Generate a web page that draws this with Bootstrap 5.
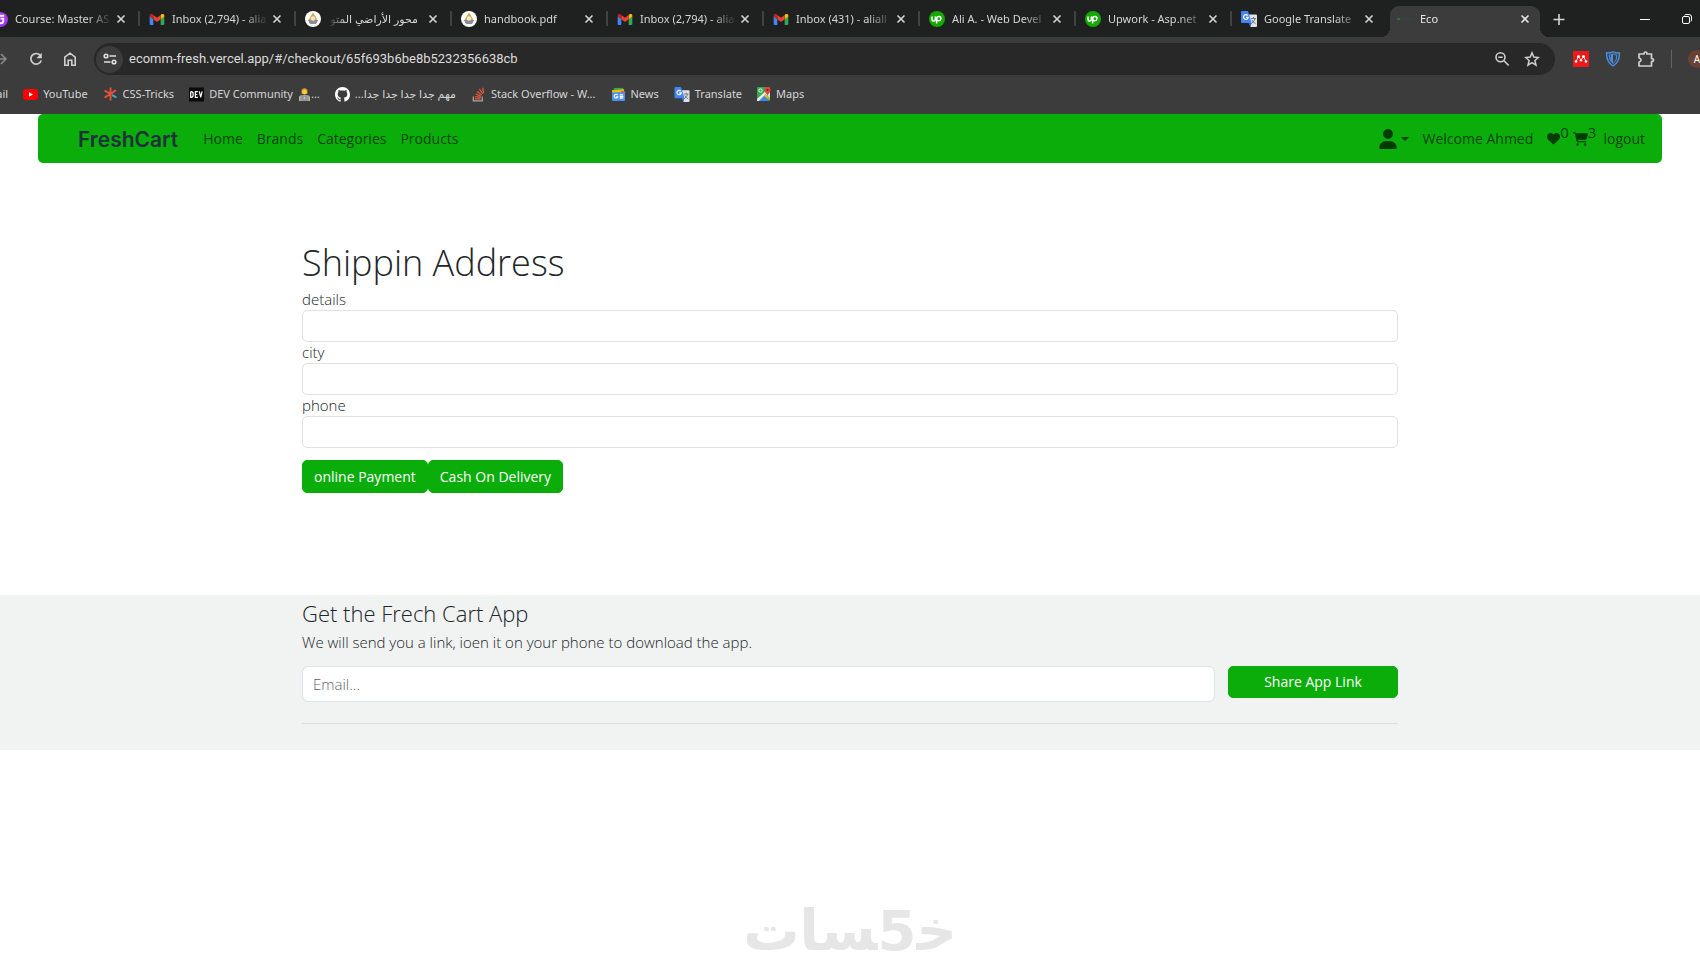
<!DOCTYPE html>
<html lang="en">
<head>
<meta charset="utf-8">
<meta name="viewport" content="width=device-width, initial-scale=1">
<title>Eco</title>
<link href="https://cdn.jsdelivr.net/npm/bootstrap@5.3.0/dist/css/bootstrap.min.css" rel="stylesheet">
<style>
  :root { --fresh: #0aad0a; --chrome: #3c3c3c; }
  body { font-family: "Open Sans", "Noto Sans", sans-serif; font-size: 15px; font-weight: 300; line-height: 21px; min-height: 100vh; overflow-x: hidden; }

  /* browser frame */
  .browser { background: var(--chrome); color: #d6d6d6; font-family: "Noto Sans", "DejaVu Sans", sans-serif; font-size: 11px; font-weight: 400; line-height: 16px; }
  .browser a { color: inherit; text-decoration: none; white-space: nowrap; }
  .browser button { background: none; border: 0; padding: 0; color: inherit; display: flex; }
  .tabstrip { background: #1f2120; height: 37px; padding-top: 6px; overflow: hidden; margin: 0; }
  .tabs-left { margin-left: -17px; }
  .tab { width: 156px; height: 31px; padding: 0 12px 5px 10px; position: relative; flex: none; }
  .tab + .tab:not(.current)::before { content: ""; position: absolute; left: -1px; top: 5px; width: 2px; height: 15px; background: #414342; }
  .tab a { gap: 7px; min-width: 0; flex: 1; }
  .tab-title { flex: 1; min-width: 0; overflow: hidden; -webkit-mask-image: linear-gradient(90deg, #000 72%, transparent 98%); mask-image: linear-gradient(90deg, #000 72%, transparent 98%); }
  .tab-title.rtl { direction: rtl; padding-right: 9px; -webkit-mask-image: linear-gradient(270deg, #000 82%, transparent); mask-image: linear-gradient(270deg, #000 82%, transparent); }
  .tab.current { color: #e6e6e6; z-index: 1; }
  .tab.current .tab-shape { position: absolute; inset: 0 3px 0 3px; background: var(--chrome); border-radius: 9px 9px 0 0; z-index: -1; }
  .tab-shape::before, .tab-shape::after { content: ""; position: absolute; bottom: 0; width: 9px; height: 9px; }
  .tab-shape::before { left: -9px; background: radial-gradient(circle at 0 0, transparent 9px, var(--chrome) 9px); }
  .tab-shape::after { right: -9px; background: radial-gradient(circle at 100% 0, transparent 9px, var(--chrome) 9px); }
  .window-controls { gap: 32px; margin-right: 8px; padding-bottom: 6px; }
  .toolbar { padding: 6px 0 7px; gap: 18px; height: 45px; overflow: hidden; }
  .toolbar-nav { gap: 18px; margin-left: -8px; }
  .omnibox { background: #282828; border-radius: 16px; height: 32px; padding: 0 15px 0 2px; gap: 6px; margin-left: -2px; }
  .browser .site-info { width: 27px; height: 27px; border-radius: 50%; background: #3c3c3c; }
  .omnibox input { flex: 1; min-width: 0; background: transparent; border: 0; color: #dcdcdc; font-family: Roboto, sans-serif; font-size: 13px; outline: 0; padding: 0; }
  .extensions { gap: 16px; margin-right: -6px; }
  .browser .avatar { width: 18px; height: 18px; border-radius: 50%; background: #6b4035; color: #fff; font-size: 10px; flex: none; }
  .bookmarks { height: 32px; gap: 15px; padding-bottom: 8px; margin-left: -22px; }
  .bookmarks a { gap: 5px; }

  /* shop page */
  .shop-nav { --bs-navbar-nav-link-padding-x: 7px; background: var(--fresh); margin: 0 38px; height: 49px; border-radius: 5px; padding: 0 17px 0 40px; }
  .shop-nav .navbar-brand { font-family: Inter, sans-serif; font-weight: 600; font-size: 21px; color: #21313c; margin-right: 18px; padding: 2px 0 0; }
  .shop-nav .nav-link { padding-top: 0; padding-bottom: 0; color: rgba(0,0,0,.65); font-size: 14px; font-weight: 400; }
  .counter { font-size: 15px; line-height: 14px; margin-bottom: 13px; }
  .shop-container { max-width: 1120px; }
  .checkout { padding-top: 79px; padding-bottom: 102px; }
  .checkout h1 { font-size: 36px; line-height: 41px; font-weight: 300; margin-bottom: 6px; }
  .checkout label { display: block; line-height: 21px; }
  .checkout .form-control { height: 32px; border-radius: 5px; }
  .form-control { border-color: #dee2e6; font-size: 15px; font-weight: 300; padding: 0 10px; }
  .btn-fresh { --bs-btn-color: #fff; --bs-btn-bg: var(--fresh); --bs-btn-border-color: var(--fresh); --bs-btn-hover-bg: #099309; --bs-btn-hover-color: #fff; --bs-btn-border-radius: 5px; --bs-btn-padding-y: 5px; --bs-btn-padding-x: 11px; --bs-btn-font-size: 14px; --bs-btn-line-height: 21px; --bs-btn-font-weight: 400; }
  .app-footer { background: #f0f3f2; padding: 6px 0 26px; }
  .app-footer h2 { font-size: 22px; line-height: 25px; font-weight: 300; margin-bottom: 6px; }
  .app-footer p { margin-bottom: 13px; }
  .app-footer .form-control { height: 36px; }
  .app-footer .btn-fresh { width: 170px; flex: none; padding-top: 4px; padding-bottom: 5px; }
  .app-footer form { gap: 13px; }
  .app-footer hr { margin: 21px 0 0; color: #c8cccb; opacity: .5; }
  .watermark { font-family: "DejaVu Sans", sans-serif; font-weight: 700; font-size: 56px; line-height: 60px; color: #e6e6e6; padding-bottom: 9px; }
</style>
</head>
<body class="d-flex flex-column bg-white">

<svg width="0" height="0" class="position-absolute" aria-hidden="true">
  <symbol id="i-gmail" viewBox="0 0 16 12"><path fill="#4285f4" d="M1 12h3V5.500L0 2.500V11a1 1 0 0 0 1 1z"/><path fill="#34a853" d="M12 12h3a1 1 0 0 0 1-1V2.500l-4 3z"/><path fill="#fbbc04" d="M12 1v4.600l4-3V1.800C16 .2 14.200-.6 13 .3z"/><path fill="#ea4335" d="M4 5.600V1l4 3 4-3v4.600l-4 3z"/><path fill="#c5221f" d="M0 1.800v.8l4 3V1L3 .3C1.800-.6 0 .2 0 1.800z"/></symbol>
  <symbol id="i-close" viewBox="0 0 12 12"><path stroke="currentColor" stroke-width="1.600" d="M2.500 2.500l7 7m0-7l-7 7"/></symbol>
  <symbol id="i-crest" viewBox="0 0 16 16"><circle cx="8" cy="8" r="8" fill="#fff"/><path fill="#d8a64a" d="M8 1.500l2.500 4 2.500 4.500H3l2.500-4.500z"/><path fill="#8a8d96" d="M3 9h10l-2 4H5z"/><circle cx="8" cy="7.500" r="2.200" fill="#f6e9c5"/><path stroke="#8b93a6" fill="none" d="M4 11q4 3 8 0"/></symbol>
  <symbol id="i-upwork" viewBox="0 0 16 16"><circle cx="8" cy="8" r="8" fill="#14a800"/><path fill="none" stroke="#fff" stroke-width="1.500" d="M3 5.500v2.700c0 2.400 3.300 2.400 3.300 0V5.500c.7 2.500 1.900 4.200 3.500 4.200a2.100 2.100 0 1 0-2-2.600L7.600 12.500"/></symbol>
  <symbol id="i-translate" viewBox="0 0 16 16"><path fill="#dfe2e6" d="M7 3.500h8a1 1 0 0 1 1 1V15a1 1 0 0 1-1 1H9.500z"/><path fill="none" stroke="#717780" d="M10 7.500h5M12.500 6v1.500M14 7.500q-.5 3-3.500 5M11 9q1 2.500 3.500 3.500"/><path fill="#4285f4" d="M1 0h6l3.700 12H1a1 1 0 0 1-1-1V1a1 1 0 0 1 1-1z"/><path fill="#3367d6" d="M7.500 12h3.200L9.300 16z"/><path fill="none" stroke="#fff" stroke-width="1.200" d="M6.700 4.500A2.300 2.300 0 1 0 7.200 6.300H5"/></symbol>
</svg>

<header class="browser">
  <div class="tabstrip d-flex justify-content-between align-items-start">
    <div class="tabs-left d-flex">
      <div class="tab d-flex align-items-center"><a href="#" class="d-flex align-items-center"><svg width="15" height="15" viewBox="0 0 16 16"><circle cx="8" cy="8" r="8" fill="#a435f0"/><path fill="none" stroke="#fff" stroke-width="2" d="M12 4H6v5c0 4 5 4 5 0V7H8"/></svg><span class="tab-title">Course: Master AS</span></a><button aria-label="Close tab"><svg width="12" height="12"><use href="#i-close"/></svg></button></div>
      <div class="tab d-flex align-items-center"><a href="#" class="d-flex align-items-center"><svg width="16" height="11"><use href="#i-gmail"/></svg><span class="tab-title">Inbox (2,794) - alia</span></a><button aria-label="Close tab"><svg width="12" height="12"><use href="#i-close"/></svg></button></div>
      <div class="tab d-flex align-items-center"><a href="#" class="d-flex align-items-center"><svg width="16" height="16"><use href="#i-crest"/></svg><span class="tab-title rtl">محور الأراضي المتو</span></a><button aria-label="Close tab"><svg width="12" height="12"><use href="#i-close"/></svg></button></div>
      <div class="tab d-flex align-items-center"><a href="#" class="d-flex align-items-center"><svg width="16" height="16"><use href="#i-crest"/></svg><span class="tab-title">handbook.pdf</span></a><button aria-label="Close tab"><svg width="12" height="12"><use href="#i-close"/></svg></button></div>
      <div class="tab d-flex align-items-center"><a href="#" class="d-flex align-items-center"><svg width="16" height="11"><use href="#i-gmail"/></svg><span class="tab-title">Inbox (2,794) - alia</span></a><button aria-label="Close tab"><svg width="12" height="12"><use href="#i-close"/></svg></button></div>
      <div class="tab d-flex align-items-center"><a href="#" class="d-flex align-items-center"><svg width="16" height="11"><use href="#i-gmail"/></svg><span class="tab-title">Inbox (431) - aliall</span></a><button aria-label="Close tab"><svg width="12" height="12"><use href="#i-close"/></svg></button></div>
      <div class="tab d-flex align-items-center"><a href="#" class="d-flex align-items-center"><svg width="16" height="16"><use href="#i-upwork"/></svg><span class="tab-title">Ali A. - Web Devel</span></a><button aria-label="Close tab"><svg width="12" height="12"><use href="#i-close"/></svg></button></div>
      <div class="tab d-flex align-items-center"><a href="#" class="d-flex align-items-center"><svg width="16" height="16"><use href="#i-upwork"/></svg><span class="tab-title">Upwork - Asp.net</span></a><button aria-label="Close tab"><svg width="12" height="12"><use href="#i-close"/></svg></button></div>
      <div class="tab d-flex align-items-center"><a href="#" class="d-flex align-items-center"><svg width="16" height="16"><use href="#i-translate"/></svg><span class="tab-title">Google Translate</span></a><button aria-label="Close tab"><svg width="12" height="12"><use href="#i-close"/></svg></button></div>
      <div class="tab current d-flex align-items-center"><span class="tab-shape"></span><a href="#" class="d-flex align-items-center"><svg width="16" height="4" viewBox="0 0 16 4"><path stroke="#1f7a35" stroke-width="2" d="M0 2h3"/><path stroke="#2b4a50" stroke-width="1.500" stroke-dasharray="1.500 .6" d="M4 2h12"/></svg><span class="tab-title">Eco</span></a><button aria-label="Close tab"><svg width="12" height="12"><use href="#i-close"/></svg></button></div>
      <button class="align-self-start pt-2" aria-label="New tab"><svg width="24" height="11" viewBox="0 0 24 11"><path stroke="currentColor" stroke-width="1.600" d="M16 0v11M10.500 5.500h11"/></svg></button>
    </div>
    <div class="window-controls d-flex align-items-center align-self-stretch">
      <button aria-label="Minimize"><svg width="10" height="10" viewBox="0 0 10 10"><path stroke="#fff" d="M0 5.500h10"/></svg></button>
      <button aria-label="Restore"><svg width="10" height="10" viewBox="0 0 10 10"><g fill="none" stroke="#fff"><rect x=".5" y="2.500" width="7" height="7" rx="1.500"/><path d="M2.500 1.200Q3 .5 4 .5h3q2.500 0 2.500 2.500v3q0 1-.7 1.500"/></g></svg></button>
    </div>
  </div>

  <div class="toolbar d-flex align-items-center">
    <div class="toolbar-nav d-flex align-items-center">
      <button aria-label="Forward"><svg width="18" height="16" viewBox="0 0 18 16"><path fill="none" stroke="#8a8a8a" stroke-width="1.600" d="M0 8h14M9 3l5 5-5 5"/></svg></button>
      <button aria-label="Reload"><svg width="16" height="16" viewBox="0 0 16 16"><path fill="none" stroke="#d0d0d0" stroke-width="1.700" d="M12.300 4.500A5.300 5.300 0 1 0 13.200 9.500"/><path fill="#d0d0d0" d="M13.800 1.800v5.400H8.400z"/></svg></button>
      <button aria-label="Home"><svg width="16" height="16" viewBox="0 0 16 16"><path fill="none" stroke="#d0d0d0" stroke-width="1.600" d="M2.800 6.200L8 2.200l5.200 4v8H9.800V9.300H6.200v4.900H2.800z"/></svg></button>
    </div>
    <div class="omnibox d-flex align-items-center flex-grow-1">
      <button class="site-info align-items-center justify-content-center flex-shrink-0" aria-label="Site information"><svg width="14" height="12" viewBox="0 0 14 12"><g fill="none" stroke="#e0e0e0" stroke-width="1.600"><circle cx="3" cy="3" r="1.800"/><path d="M6.500 3H13M1 9h6.500"/><circle cx="11" cy="9" r="1.800"/></g></svg></button>
      <input type="text" aria-label="Address" value="ecomm-fresh.vercel.app/#/checkout/65f693b6be8b5232356638cb">
      <button class="me-2" aria-label="Zoom"><svg width="16" height="16" viewBox="0 0 16 16"><g fill="none" stroke="#d0d0d0" stroke-width="1.600"><circle cx="6.500" cy="6.300" r="4.500"/><path d="M10 9.800l4.700 4.700M4.300 6.300h4.400"/></g></svg></button>
      <button aria-label="Bookmark this tab"><svg width="16" height="16" viewBox="0 0 16 16"><path fill="none" stroke="#d0d0d0" stroke-width="1.500" d="M8 1.800l1.800 4.300 4.600.4-3.500 3 1.100 4.600-4-2.500-4 2.500 1.100-4.600-3.500-3 4.600-.4z"/></svg></button>
    </div>
    <div class="extensions d-flex align-items-center">
      <button aria-label="Mendeley"><svg width="16" height="16" viewBox="0 0 16 16"><path fill="#f01818" d="M0 0h16v16H0z"/><g fill="#fff"><circle cx="5.500" cy="5.600" r="1.500"/><circle cx="10.500" cy="5.600" r="1.500"/><circle cx="3" cy="10.500" r="1.300"/><circle cx="8" cy="9.300" r="1.200"/><circle cx="13" cy="10.500" r="1.300"/></g><path fill="none" stroke="#fff" stroke-width=".8" d="M3 10.500L5.500 5.500 8 9l2.500-3.500 2.500 5"/></svg></button>
      <button aria-label="Shield"><svg width="16" height="16" viewBox="0 0 16 16"><g fill="none" stroke="#4a90e2"><path stroke-width="1.400" d="M1.500 2Q5 2.300 8 .9q3 1.400 6.500 1.100 0 9.500-6.500 13Q1.500 11.500 1.500 2z"/><path d="M4 4q2 0 4-1 2 1 4 1 0 6-4 8.500Q4 10 4 4z"/></g><path fill="#4a90e2" d="M8 3v9.500Q4 10 6 4z"/></svg></button>
      <button aria-label="Extensions"><svg width="18" height="18" viewBox="0 0 18 18"><path fill="none" stroke="#d0d0d0" stroke-width="1.700" stroke-linejoin="round" d="M2 4h5q0-2 1.500-2T10 4h4.500v4.500q2 0 2 1.500t-2 1.500V16H2v-4q2-.5 2-2T2 8z"/></svg></button>
      <span class="vr"></span>
      <button class="avatar align-items-center justify-content-center" aria-label="Profile">A</button>
    </div>
  </div>

  <nav class="bookmarks d-flex align-items-center" aria-label="Bookmarks">
    <a href="#">Gmail</a>
    <a href="#" class="d-flex align-items-center"><svg width="15" height="11" viewBox="0 0 15 11"><rect width="15" height="11" rx="3" fill="#f00"/><path fill="#fff" d="M6 3.300v4.400l4-2.200z"/></svg>YouTube</a>
    <a href="#" class="d-flex align-items-center"><svg width="15" height="14" viewBox="0 0 16 16"><g stroke-width="2.200" stroke-linecap="round"><path stroke="#e8503a" d="M8 8V1.500M8 8L2 4.500M8 8l-6 3.500M8 8v6.500M8 8l5.500-4"/><path stroke="#3fa9c9" d="M10.500 9.500l3.500 2"/></g></svg>CSS-Tricks</a>
    <a href="#" class="d-flex align-items-center"><svg width="15" height="15" viewBox="0 0 16 15"><path fill="#0a0a0a" d="M0 0h16v15H0z"/><g fill="none" stroke="#fff" stroke-width="1.300"><path d="M1.800 4.500v6q2.700.3 2.700-3t-2.700-3M9.500 4.500H6.800v6h2.700M6.800 7.500h2.200M11 4.200l1.500 6.300L14 4.200"/></g></svg>DEV Community <span class="d-flex align-items-center"><svg width="13" height="13" viewBox="0 0 13 13"><path fill="#b98a2e" d="M3.500 1.500Q6.500-1.500 9.500 1.500V6h-6z"/><circle cx="6.500" cy="4" r="2.400" fill="#ffcf3f"/><path fill="#c8b089" d="M1 13V9q0-2 5.500-2T12 9v4z"/><path fill="#8f969c" d="M2.500 7.500h8V13h-8z"/><circle cx="6.500" cy="10" r=".8" fill="#ddd"/></svg>...</span></a>
    <a href="#" class="d-flex align-items-center"><svg width="15" height="15" viewBox="0 0 16 16"><path fill="#fff" d="M8 0C3.580 0 0 3.580 0 8c0 3.540 2.290 6.530 5.470 7.590.4.070.55-.17.55-.38 0-.19-.01-.82-.01-1.490-2.010.37-2.530-.49-2.690-.94-.09-.23-.48-.94-.82-1.130-.28-.15-.68-.52-.01-.53.63-.01 1.080.58 1.230.82.72 1.210 1.870.87 2.330.66.070-.52.28-.87.51-1.070-1.780-.2-3.640-.89-3.640-3.950 0-.87.31-1.590.82-2.150-.08-.2-.36-1.020.08-2.120 0 0 .67-.21 2.200.82.64-.18 1.320-.27 2-.27s1.360.09 2 .27c1.530-1.040 2.200-.82 2.200-.82.44 1.100.16 1.920.08 2.120.51.56.82 1.270.82 2.150 0 3.070-1.870 3.750-3.650 3.950.29.25.54.73.54 1.480 0 1.070-.01 1.930-.01 2.200 0 .21.15.46.55.38A8.010 8.010 0 0 0 16 8c0-4.420-3.580-8-8-8z"/></svg><span dir="rtl">مهم جدا جدا جدا جدا...</span></a>
    <a href="#" class="d-flex align-items-center"><svg width="15" height="15" viewBox="0 0 16 16"><path fill="none" stroke="#aaa" stroke-width="1.300" d="M2.500 10v4.800h9.500V10"/><path stroke="#f0583a" stroke-width="1.300" d="M4.200 12.700h6M4.300 10.200l6 .9M5 7.500l5.600 2.200M6.600 4.800l4.800 3.600M9 2.300l3.600 4.800M12.500.8l1 5.700"/></svg>Stack Overflow - W...</a>
    <a href="#" class="d-flex align-items-center"><svg width="15" height="14" viewBox="0 0 16 15"><path fill="#34a853" d="M3 1h10v5H3z"/><path fill="#fbbc04" d="M1 3.500l13-1V7H1z"/><path fill="#ea4335" d="M11 4l4.500 1-1 3H11z"/><path fill="#4a90f4" d="M1 5.500h14V14a1 1 0 0 1-1 1H2a1 1 0 0 1-1-1z"/><path fill="none" stroke="#fff" stroke-width="1.300" d="M7 8.600a2 2 0 1 0 .2 2H5.500M9.300 8.500H13M9.300 10.300h4M9.300 12H13"/></svg>News</a>
    <a href="#" class="d-flex align-items-center"><svg width="16" height="15"><use href="#i-translate"/></svg>Translate</a>
    <a href="#" class="d-flex align-items-center"><svg width="14" height="14" viewBox="0 0 14 14"><rect width="13" height="14" y="0" rx="1" fill="#34a853"/><path fill="#e8eaed" d="M0 12L12 1v3L2 14H0z"/><path fill="#4285f4" d="M2.500 14L7 9l5 5z"/><path fill="#fbbc04" d="M7 9l1.500-1.500L13 12v1z"/><path fill="#dadce0" d="M8.500 7.500L13 5v6z"/><circle cx="3.500" cy="3.500" r="1.700" fill="none" stroke="#fff" stroke-width=".9"/><path fill="#ea4335" d="M10.500 9C10 6.500 7.500 5.500 7.500 3a3 3 0 0 1 6 0c0 2.500-2.500 3.500-3 6z"/><circle cx="10.500" cy="3" r="1.100" fill="#8c1d18"/></svg>Maps</a>
  </nav>
</header>

<nav class="shop-nav navbar navbar-expand" aria-label="Main">
  <a class="navbar-brand" href="#">FreshCart</a>
  <ul class="navbar-nav me-auto">
    <li class="nav-item"><a class="nav-link" href="#">Home</a></li>
    <li class="nav-item"><a class="nav-link" href="#">Brands</a></li>
    <li class="nav-item"><a class="nav-link" href="#">Categories</a></li>
    <li class="nav-item"><a class="nav-link" href="#">Products</a></li>
  </ul>
  <ul class="navbar-nav align-items-center">
    <li class="nav-item"><a class="nav-link dropdown-toggle d-flex align-items-center" href="#" aria-label="Account"><svg width="18" height="20" viewBox="0 0 448 512" fill="currentColor"><path d="M224 256A128 128 0 1 0 224 0a128 128 0 1 0 0 256zm-45.700 48C79.800 304 0 383.800 0 482.300C0 498.700 13.300 512 29.700 512H418.300c16.400 0 29.700-13.300 29.700-29.700C448 383.800 368.200 304 269.700 304H178.300z"/></svg></a></li>
    <li class="nav-item"><a class="nav-link" href="#">Welcome Ahmed</a></li>
    <li class="nav-item"><a class="nav-link pe-1 d-flex align-items-center" href="#" aria-label="Wishlist"><svg width="13" height="13" viewBox="0 0 512 512" fill="currentColor"><path d="M47.600 300.400L228.300 469.100c7.500 7 17.400 10.900 27.700 10.900s20.200-3.900 27.700-10.900L464.400 300.400c30.400-28.300 47.600-68 47.600-109.500v-5.800c0-69.900-50.500-129.500-119.400-141C347 36.500 300.600 51.400 268 84L256 96 244 84c-32.600-32.600-79-47.500-124.600-39.900C50.500 55.600 0 115.200 0 185.100v5.800c0 41.500 17.200 81.200 47.600 109.500z"/></svg><span class="counter">0</span></a></li>
    <li class="nav-item"><a class="nav-link px-0 d-flex align-items-center" href="#" aria-label="Cart"><svg width="15" height="14" viewBox="0 0 576 512" fill="currentColor"><path d="M0 24C0 10.700 10.700 0 24 0H69.500c22 0 41.500 12.800 50.600 32h411c26.300 0 45.500 25 38.600 50.400l-41 152.300c-8.500 31.400-37 53.300-69.500 53.300H170.700l5.400 28.500c2.200 11.300 12.100 19.500 23.600 19.500H488c13.300 0 24 10.700 24 24s-10.700 24-24 24H199.700c-34.600 0-64.300-24.600-70.700-58.500L77.400 54.500c-.7-3.800-4-6.500-7.900-6.500H24C10.700 48 0 37.300 0 24zM128 464a48 48 0 1 1 96 0 48 48 0 1 1 -96 0zm336-48a48 48 0 1 1 0 96 48 48 0 1 1 0-96z"/></svg><span class="counter">3</span></a></li>
    <li class="nav-item"><a class="nav-link pe-0" href="#">logout</a></li>
  </ul>
</nav>

<main class="checkout container shop-container">
  <h1>Shippin Address</h1>
  <form>
    <label for="details">details</label>
    <input id="details" type="text" class="form-control">
    <label for="city">city</label>
    <input id="city" type="text" class="form-control">
    <label for="phone">phone</label>
    <input id="phone" type="tel" class="form-control">
    <div class="d-flex mt-2 pt-1">
      <button type="button" class="btn btn-fresh">online Payment</button>
      <button type="button" class="btn btn-fresh">Cash On Delivery</button>
    </div>
  </form>
</main>

<footer class="app-footer">
  <div class="container shop-container">
    <h2>Get the Frech Cart App</h2>
    <p>We will send you a link, ioen it on your phone to download the app.</p>
    <form class="d-flex align-items-start">
      <input type="email" class="form-control" placeholder="Email..." aria-label="Email">
      <button type="button" class="btn btn-fresh">Share App Link</button>
    </form>
    <hr>
  </div>
</footer>

<div class="watermark mt-auto text-center" dir="rtl" lang="ar">خ&zwj;5&zwj;سات</div>

<script src="https://cdn.jsdelivr.net/npm/bootstrap@5.3.0/dist/js/bootstrap.bundle.min.js"></script>
</body>
</html>
